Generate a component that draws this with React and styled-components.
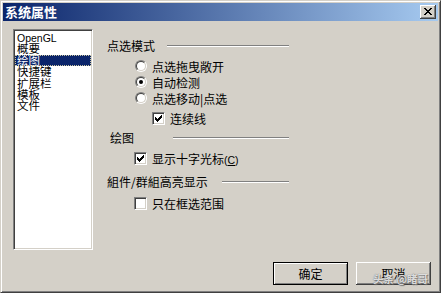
import React from 'react';
import styled, { createGlobalStyle } from 'styled-components';

const Global = createGlobalStyle`
  html, body { margin: 0; padding: 0; background: #d4d0c8; }
  body {
    font-family: "Noto Sans CJK SC", "Liberation Sans", sans-serif;
    font-size: 12px;
    color: #000;
  }
`;

const Window = styled.div`
  position: relative;
  box-sizing: border-box;
  width: 441px;
  height: 293px;
  background: #d4d0c8;
  border: 1px solid;
  border-color: #d4d0c8 #404040 #404040 #d4d0c8;
  box-shadow: inset 1px 1px #fff, inset -1px -1px #808080;
  padding: 2px;
  display: flex;
  flex-direction: column;
  overflow: hidden;
`;

const TitleBar = styled.div`
  height: 18px;
  flex: none;
  display: flex;
  align-items: center;
  padding: 0 2px;
  background: linear-gradient(to right, #0a246a, #a6caf0);
  color: #fff;
`;

const Title = styled.span`
  font-family: "Noto Sans CJK SC", sans-serif;
  font-weight: 700;
  font-size: 13px;
  line-height: 18px;
`;

const CloseButton = styled.span`
  box-sizing: border-box;
  margin-left: auto;
  width: 16px;
  height: 14px;
  background: #d4d0c8;
  box-shadow: inset -1px -1px #404040, inset 1px 1px #fff, inset -2px -2px #808080;
  display: flex;
  align-items: center;
  justify-content: center;
  padding: 0 1px 1px 0;
`;

const Content = styled.div`
  flex: 1;
  display: flex;
  flex-direction: column;
  padding: 8px 7px 5px 10px;
`;

const MainRow = styled.div`
  display: flex;
  align-items: flex-start;
`;

const ListBox = styled.div`
  box-sizing: border-box;
  width: 80px;
  height: 221px;
  background: #fff;
  border: 1px solid;
  border-color: #808080 #fff #fff #808080;
  box-shadow: inset 1px 1px #404040, inset -1px -1px #d4d0c8;
  padding: 2px 1px 1px 1px;
  display: flex;
  flex-direction: column;
`;

const ListItem = styled.div`
  box-sizing: border-box;
  height: 11.4px;
  line-height: 11.4px;
  font-size: 11.5px;
  padding-left: 2px;
  white-space: nowrap;
  background: ${p => (p.$selected ? '#0a246a' : 'transparent')};
  color: ${p => (p.$selected ? '#fff' : '#000')};
  outline: ${p => (p.$selected ? '1px dotted #c8c4a0' : 'none')};
  outline-offset: -1px;
`;

const Latin = styled.span`
  font-family: "Liberation Sans", sans-serif;
  font-size: 10.5px;
`;

const RightPanel = styled.div`
  margin-left: 14px;
  padding-top: 9px;
  width: 182px;
  display: flex;
  flex-direction: column;
`;

const GroupHeader = styled.div`
  display: flex;
  align-items: center;
  height: 16px;
  margin-top: ${p => p.$top || 0}px;
`;

const GroupLabel = styled.span`
  box-sizing: border-box;
  width: ${p => p.$width}px;
  flex: none;
  padding-left: ${p => p.$indent || 0}px;
  white-space: nowrap;
  line-height: 16px;
`;

const Etched = styled.span`
  flex: 1;
  height: 0;
  border-top: 1px solid #808080;
  border-bottom: 1px solid #fff;
`;

const OptionRow = styled.div`
  display: flex;
  align-items: center;
  height: 16px;
  gap: 5px;
  padding-left: ${p => p.$indent}px;
  margin-top: ${p => p.$top || 0}px;
  white-space: nowrap;
`;

const RadioOuter = styled.span`
  box-sizing: border-box;
  width: 12px;
  height: 12px;
  flex: none;
  border-radius: 50%;
  border: 1px solid;
  border-color: #808080 #fff #fff #808080;
  display: flex;
  align-items: center;
  justify-content: center;
`;

const RadioInner = styled.span`
  box-sizing: border-box;
  width: 10px;
  height: 10px;
  border-radius: 50%;
  border: 1px solid;
  border-color: #404040 #d4d0c8 #d4d0c8 #404040;
  background: #fff;
  display: flex;
  align-items: center;
  justify-content: center;
`;

const RadioDot = styled.span`
  width: 4px;
  height: 4px;
  border-radius: 50%;
  background: #000;
`;

const CheckBox = styled.span`
  box-sizing: border-box;
  width: 13px;
  height: 13px;
  flex: none;
  border: 1px solid;
  border-color: #808080 #fff #fff #808080;
  box-shadow: inset 1px 1px #404040, inset -1px -1px #d4d0c8;
  background: #fff;
  display: flex;
  align-items: center;
  justify-content: center;
`;

const Underline = styled.span`
  text-decoration: underline;
`;

const ButtonRow = styled.div`
  display: flex;
  justify-content: flex-end;
  gap: 8px;
  margin-top: 12px;
`;

const Button = styled.div`
  box-sizing: border-box;
  width: 75px;
  height: 23px;
  display: flex;
  align-items: center;
  justify-content: center;
  background: #d4d0c8;
  font-size: 12px;
  border: ${p => (p.$default ? '1px solid #000' : 'none')};
  box-shadow: ${p =>
    p.$default
      ? 'inset 1px 1px #fff, inset -1px -1px #808080'
      : 'inset -1px -1px #404040, inset 1px 1px #fff, inset -2px -2px #808080'};
`;

const Watermark = styled.span`
  position: absolute;
  left: 372px;
  top: 272px;
  font-size: 10.5px;
  font-weight: 700;
  line-height: 12px;
  color: rgba(255, 255, 255, 0.8);
  text-shadow: 0 0 1px #555, 1px 1px 1px #777;
  white-space: nowrap;
  pointer-events: none;
`;

const CHECK = [
  '......#',
  '.....##',
  '#...###',
  '##.###.',
  '#####..',
  '.###...',
  '..#....',
];

const CLOSE_X = [
  '##....##',
  '.##..##.',
  '..####..',
  '...##...',
  '..####..',
  '.##..##.',
  '##....##',
];

function PixelIcon({ rows, color = '#000' }) {
  const w = rows[0].length;
  const h = rows.length;
  const rects = [];
  rows.forEach((row, y) => {
    [...row].forEach((c, x) => {
      if (c === '#') rects.push(<rect key={`${x}-${y}`} x={x} y={y} width="1" height="1" />);
    });
  });
  return (
    <svg width={w} height={h} viewBox={`0 0 ${w} ${h}`} fill={color} shapeRendering="crispEdges">
      {rects}
    </svg>
  );
}

function Radio({ checked }) {
  return (
    <RadioOuter>
      <RadioInner>{checked && <RadioDot />}</RadioInner>
    </RadioOuter>
  );
}

function Check({ checked }) {
  return <CheckBox>{checked && <PixelIcon rows={CHECK} />}</CheckBox>;
}

const items = ['OpenGL', '概要', '绘图', '快捷键', '扩展栏', '模板', '文件'];

export default function App() {
  return (
    <>
      <Global />
      <Window>
        <TitleBar>
          <Title>系统属性</Title>
          <CloseButton>
            <PixelIcon rows={CLOSE_X} />
          </CloseButton>
        </TitleBar>
        <Content>
          <MainRow>
            <ListBox>
              {items.map((t, i) => (
                <ListItem key={t} $selected={i === 2}>
                  {/^[A-Za-z]+$/.test(t) ? <Latin>{t}</Latin> : t}
                </ListItem>
              ))}
            </ListBox>
            <RightPanel>
              <GroupHeader>
                <GroupLabel $width={60}>点选模式</GroupLabel>
                <Etched />
              </GroupHeader>
              <OptionRow $indent={28} $top={4}>
                <Radio />
                <span>点选拖曳敞开</span>
              </OptionRow>
              <OptionRow $indent={28}>
                <Radio checked />
                <span>自动检测</span>
              </OptionRow>
              <OptionRow $indent={28}>
                <Radio />
                <span>点选移动|点选</span>
              </OptionRow>
              <OptionRow $indent={45} $top={4}>
                <Check checked />
                <span>连续线</span>
              </OptionRow>
              <GroupHeader $top={4}>
                <GroupLabel $width={66} $indent={3}>绘图</GroupLabel>
                <Etched />
              </GroupHeader>
              <OptionRow $indent={27} $top={4}>
                <Check checked />
                <span>
                  显示十字光标<Latin>(<Underline>C</Underline>)</Latin>
                </span>
              </OptionRow>
              <GroupHeader $top={8}>
                <GroupLabel $width={115}>組件/群組高亮显示</GroupLabel>
                <Etched />
              </GroupHeader>
              <OptionRow $indent={27} $top={5}>
                <Check />
                <span>只在框选范围</span>
              </OptionRow>
            </RightPanel>
          </MainRow>
          <ButtonRow>
            <Button $default>确定</Button>
            <Button>取消</Button>
          </ButtonRow>
        </Content>
        <Watermark>头条 @睹哥</Watermark>
      </Window>
    </>
  );
}
